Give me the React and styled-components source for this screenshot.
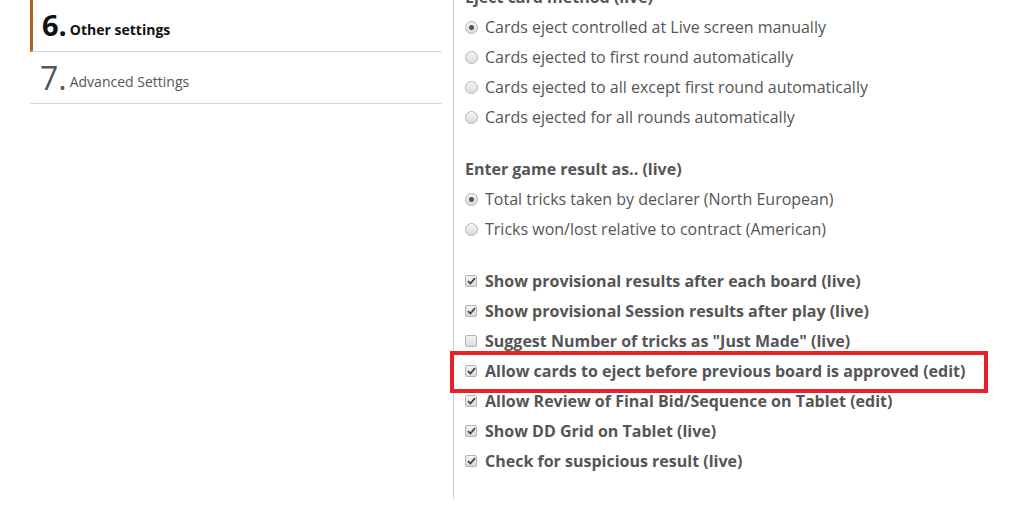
import React from 'react';
import styled, { createGlobalStyle } from 'styled-components';

const GlobalStyle = createGlobalStyle`
  html, body {
    margin: 0;
    padding: 0;
    background: #fff;
    overflow: hidden;
  }
  body {
    font-family: 'Open Sans', 'Noto Sans', sans-serif;
    color: #555;
  }
`;

const Page = styled.div`
  display: flex;
  width: 1014px;
  height: 505px;
  overflow: hidden;
`;

const StepList = styled.div`
  width: 412px;
  margin-left: 30px;
  display: flex;
  flex-direction: column;
`;

const Step = styled.div`
  height: 51px;
  display: flex;
  align-items: center;
  padding-left: ${p => (p.active ? '9px' : '10px')};
  border-left: ${p => (p.active ? '3px solid #b4621c' : 'none')};
  border-bottom: 1px solid #d6d6d6;
  color: ${p => (p.active ? '#111' : '#555')};
`;

const StepNumber = styled.span`
  font-size: ${p => (p.active ? '29px' : '32px')};
  font-weight: ${p => (p.active ? 700 : 400)};
  line-height: 1;
  margin-right: 3px;
  position: relative;
  top: ${p => (p.active ? '-1px' : '0')};
`;

const StepTitle = styled.span`
  font-size: 14px;
  font-weight: ${p => (p.active ? 700 : 400)};
  position: relative;
  top: 4px;
`;

const Settings = styled.div`
  margin-left: 11px;
  border-left: 1px solid #cfcfcf;
  height: 499px;
  padding-left: 11px;
  flex: 1;
`;

const Scroller = styled.div`
  margin-top: -18px;
`;

const Group = styled.div`
  margin-bottom: 22px;
`;

const Heading = styled.div`
  font-size: 16px;
  font-weight: 700;
  line-height: 30px;
  color: #555;
`;

const Option = styled.label`
  position: relative;
  display: flex;
  align-items: center;
  height: 30px;
  font-size: 16px;
  font-weight: ${p => (p.bold ? 700 : 400)};
  color: #555;
  white-space: nowrap;
  width: max-content;

  ${p =>
    p.highlight &&
    `
    &::after {
      content: '';
      position: absolute;
      left: -15px;
      right: -23px;
      top: -5px;
      bottom: -7px;
      border: 4px solid #e8202b;
      pointer-events: none;
    }
  `}
`;

const Radio = styled.span`
  box-sizing: border-box;
  width: 13px;
  height: 13px;
  border-radius: 50%;
  border: 1px solid #b4b4b4;
  background: linear-gradient(#f4f4f4, #dcdcdc);
  margin-right: 7px;
  display: flex;
  align-items: center;
  justify-content: center;

  &::after {
    content: '';
    width: 5px;
    height: 5px;
    border-radius: 50%;
    background: ${p => (p.checked ? '#555' : 'transparent')};
  }
`;

const Box = styled.span`
  box-sizing: border-box;
  width: 12px;
  height: 12px;
  border-radius: 2px;
  border: 1px solid #b4b4b4;
  background: linear-gradient(#f4f4f4, #dadada);
  margin-right: 8px;
  display: flex;
  align-items: center;
  justify-content: center;
`;

const Check = () => (
  <svg width="9" height="8" viewBox="0 0 9 8">
    <path d="M1 4.2 L3.4 6.5 L8 1.2" fill="none" stroke="#444" strokeWidth="1.8" />
  </svg>
);

const ejectOptions = [
  'Cards eject controlled at Live screen manually',
  'Cards ejected to first round automatically',
  'Cards ejected to all except first round automatically',
  'Cards ejected for all rounds automatically'
];

const resultOptions = [
  'Total tricks taken by declarer (North European)',
  'Tricks won/lost relative to contract (American)'
];

const toggles = [
  { label: 'Show provisional results after each board (live)', on: true },
  { label: 'Show provisional Session results after play (live)', on: true },
  { label: 'Suggest Number of tricks as "Just Made" (live)', on: false },
  { label: 'Allow cards to eject before previous board is approved (edit)', on: true, highlight: true },
  { label: 'Allow Review of Final Bid/Sequence on Tablet (edit)', on: true },
  { label: 'Show DD Grid on Tablet (live)', on: true },
  { label: 'Check for suspicious result (live)', on: true }
];

const App = () => (
  <>
    <GlobalStyle />
    <Page>
      <StepList>
        <Step active>
          <StepNumber active>6.</StepNumber>
          <StepTitle active>Other settings</StepTitle>
        </Step>
        <Step>
          <StepNumber>7.</StepNumber>
          <StepTitle>Advanced Settings</StepTitle>
        </Step>
      </StepList>
      <Settings>
        <Scroller>
          <Group>
            <Heading>Eject card method (live)</Heading>
            {ejectOptions.map((o, i) => (
              <Option key={o}>
                <Radio checked={i === 0} />
                {o}
              </Option>
            ))}
          </Group>
          <Group>
            <Heading>Enter game result as.. (live)</Heading>
            {resultOptions.map((o, i) => (
              <Option key={o}>
                <Radio checked={i === 0} />
                {o}
              </Option>
            ))}
          </Group>
          <Group>
            {toggles.map(t => (
              <Option key={t.label} bold highlight={t.highlight}>
                <Box>{t.on && <Check />}</Box>
                {t.label}
              </Option>
            ))}
          </Group>
        </Scroller>
      </Settings>
    </Page>
  </>
);

export default App;
